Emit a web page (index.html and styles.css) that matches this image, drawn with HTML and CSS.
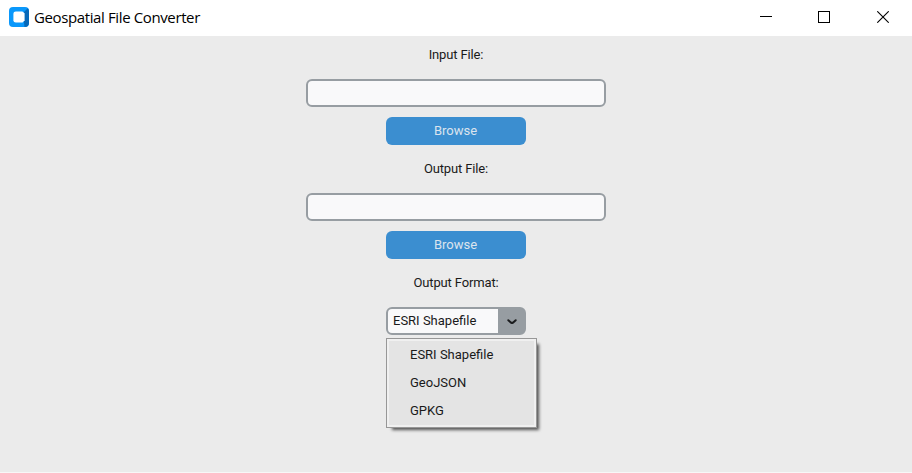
FILE: index.html
```html
<!DOCTYPE html>
<html lang="en">
<head>
<meta charset="utf-8">
<title>Geospatial File Converter</title>
<link rel="stylesheet" href="styles.css">
</head>
<body>
<div class="window">
  <header class="titlebar">
    <svg class="app-icon" width="20" height="20" viewBox="0 0 20 20">
      <rect width="20" height="20" rx="4" fill="#0a98fb"/>
      <path d="M15 5 18.8 1.2Q20 2.5 20 4.5V15.5Q20 20 15.5 20L15 15Z" fill="#0768b8"/>
      <path d="M6.8 4.4H13.4L15.6 6.2V13.2L13.6 15.6H6.8Q4.4 15.6 4.4 13.2V6.8Q4.4 4.4 6.8 4.4Z" fill="#fff"/>
    </svg>
    <span class="title">Geospatial File Converter</span>
    <div class="controls">
      <svg width="12" height="12" viewBox="0 0 12 12" shape-rendering="crispEdges"><path d="M0 5.5H12" stroke="#000"/></svg>
      <svg width="12" height="12" viewBox="0 0 12 12" shape-rendering="crispEdges"><rect x=".5" y=".5" width="11" height="11" fill="none" stroke="#000"/></svg>
      <svg class="close" width="12" height="12" viewBox="0 0 12 12"><path d="M.3.3 11.7 11.7M11.7.3.3 11.7" stroke="#000" stroke-width="1.1"/></svg>
    </div>
  </header>
  <main class="form">
    <label class="label">Input File:</label>
    <div class="entry"></div>
    <button class="button">Browse</button>
    <label class="label">Output File:</label>
    <div class="entry"></div>
    <button class="button">Browse</button>
    <label class="label">Output Format:</label>
    <div class="combo">
      <span class="combo-value">ESRI Shapefile</span>
      <span class="combo-arrow">
        <svg width="10" height="6" viewBox="0 0 10 6"><path d="M1.3 1.2 3.8 3.5 5 4.1 6.2 3.5 8.7 1.2" fill="none" stroke="#1a1b1d" stroke-width="2" stroke-linecap="round" stroke-linejoin="round"/></svg>
      </span>
      <div class="menu">
        <div class="item">ESRI Shapefile</div>
        <div class="item">GeoJSON</div>
        <div class="item">GPKG</div>
      </div>
    </div>
  </main>
</div>
</body>
</html>
```
FILE: styles.css
```css
* { box-sizing: border-box; }
body { margin: 0; background: #ebebeb; font-family: Roboto, sans-serif; font-size: 13px; color: #1a1a1a; }
.window { height: 473px; display: flex; flex-direction: column; border-bottom: 1px solid #f7f7f7; overflow: hidden; }
.titlebar { height: 36px; flex: none; background: #fff; display: flex; align-items: center; padding: 0 23px 2px 9px; }
.app-icon { flex: none; }
.title { margin-left: 5px; font-family: "Open Sans", sans-serif; font-size: 15px; line-height: 20px; letter-spacing: -0.38px; color: #000; white-space: nowrap; }
.controls { margin-left: auto; display: flex; gap: 46px; }
.close { margin-left: 1px; }
.form { display: flex; flex-direction: column; align-items: center; padding-top: 5px; }
.label { height: 28px; line-height: 28px; margin-bottom: 10px; letter-spacing: -0.14px; }
.entry { width: 300px; height: 28px; border: 2px solid #979da2; border-radius: 6px; background: #f9f9fa; margin-bottom: 10px; }
.button { width: 140px; height: 28px; padding: 0 1px 0 0; border: 0; border-radius: 6px; background: #3b8ed0; color: #dce4ee; font: inherit; line-height: 28px; margin-bottom: 10px; }
.combo { position: relative; width: 140px; height: 28px; border: 2px solid #979da2; border-radius: 6px; background: #979da2; display: flex; }
.combo-value { width: 110px; background: #f9f9fa; border-radius: 4px 0 0 4px; padding-left: 5px; line-height: 24px; }
.combo-arrow { flex: 1; display: flex; align-items: center; justify-content: center; padding: 2px 0 0 2px; }
.menu { position: absolute; left: -2px; top: 29px; width: 151px; height: 90px; padding: 2px; border: 1px solid #979797; background: #e4e4e4; box-shadow: inset 0 0 0 2px #f0f0f0, 4px 4px 3px -2px rgba(0,0,0,.65); }
.item { height: 28px; line-height: 28px; padding-left: 21px; }
```
